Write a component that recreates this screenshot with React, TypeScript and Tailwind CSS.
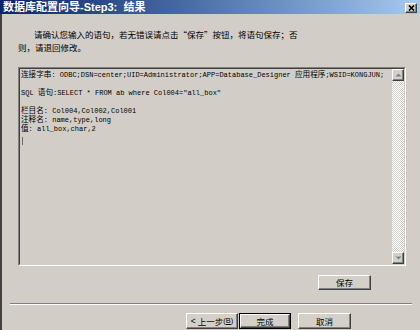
import React from "react";

const CJK = "font-['Noto_Sans_CJK_SC',sans-serif]";

/** Classic raised 3D button face. */
function Face({ className, children }: { className: string; children: React.ReactNode }) {
  return (
    <div
      className={[
        "flex items-center justify-center bg-[#d4d0c8] text-black",
        "border border-t-white border-l-white border-r-[#404040] border-b-[#404040]",
        "shadow-[inset_-1px_-1px_0_#808080]",
        className,
      ].join(" ")}
    >
      {children}
    </div>
  );
}

/** One row in the read-only text box. */
function Line({ children }: { children?: React.ReactNode }) {
  return <div className="h-[9px] leading-[9px] whitespace-nowrap">{children}</div>;
}

function Zh({ children }: { children: React.ReactNode }) {
  return <span className={`text-[7.6px] ${CJK}`}>{children}</span>;
}

function Arrow({ up }: { up?: boolean }) {
  return (
    <Face className="w-[12px] h-[12px] shrink-0">
      <svg width="7" height="4" viewBox="0 0 7 4">
        <path d={up ? "M0.5 3.5 L3.5 0.5 L6.5 3.5 Z" : "M0.5 0.5 L3.5 3.5 L6.5 0.5 Z"} fill="#808080" />
      </svg>
    </Face>
  );
}

export default function App() {
  return (
    <div className={`w-[420px] h-[330px] overflow-hidden bg-[#d2cec7] flex flex-col ${CJK}`}>
      {/* Title bar */}
      <div className="h-[14px] shrink-0 flex items-center justify-between pl-[3px] pr-[3px] bg-linear-to-r from-[#0a246a] to-[#a6caf0]">
        <span className="text-[11px] font-bold text-white leading-[14px] whitespace-pre font-['Liberation_Sans','Noto_Sans_CJK_SC',sans-serif]">
          数据库配置向导-Step3:  结果
        </span>
        <Face className="w-[12px] h-[10px] mt-[1px]">
          <svg width="7" height="6" viewBox="0 0 7 6">
            <path d="M1 0.5 L6 5.5 M6 0.5 L1 5.5" stroke="#000" strokeWidth="1.6" />
          </svg>
        </Face>
      </div>

      {/* Dialog body */}
      <div className="flex-1 flex flex-col border-l-2 border-l-[#424242]">
        <div className="pt-[14px] text-[8.5px] leading-[13px] text-black">
          <div className="pl-[32px]">请确认您输入的语句，若无错误请点击“保存”按钮，将语句保存；否</div>
          <div className="pl-[16px]">则，请退回修改。</div>
        </div>

        {/* Read-only text box */}
        <div className="mt-[13px] ml-[16px] w-[388px] h-[199px] shrink-0 border border-t-[#808080] border-l-[#808080] border-b-white border-r-white">
          <div className="h-full flex border border-t-[#404040] border-l-[#404040] border-b-[#d4d0c8] border-r-[#d4d0c8]">
            <div className="flex-1 overflow-hidden pl-[1px] text-[7px] text-black font-['Liberation_Mono','Noto_Sans_CJK_SC',monospace]">
              <Line>
                <Zh>连接字串</Zh>: ODBC;DSN=center;UID=Administrator;APP=Database_Designer <Zh>应用程序</Zh>;WSID=KONGJUN;
              </Line>
              <Line />
              <Line>
                SQL <Zh>语句</Zh>:SELECT * FROM ab where Col004="all_box"
              </Line>
              <Line />
              <Line>
                <Zh>栏目名</Zh>: Col004,Col002,Col001
              </Line>
              <Line>
                <Zh>注释名</Zh>: name,type,long
              </Line>
              <Line>
                <Zh>值</Zh>: all_box,char,2
              </Line>
              <div className="mt-[5px] ml-[0.5px] w-px h-[8px] bg-[#6a6a6a]" />
            </div>
            <div className="w-[12px] flex flex-col">
              <Arrow up />
              <div className="flex-1 bg-[repeating-conic-gradient(#d4d0c8_0_25%,#ffffff_0_50%)] bg-size-[2px_2px]" />
              <Arrow />
            </div>
          </div>
        </div>

        <Face className="mt-[9px] ml-[316px] w-[53px] h-[15px] text-[8.5px] leading-none">保存</Face>

        {/* Etched separator */}
        <div className="mt-[13px] ml-[8px] w-[402px] h-[2px] border-t border-t-[#808080] border-b border-b-white" />

        <div className="mt-[8px] ml-[184px] flex items-start">
          <Face className="w-[52px] h-[16px] text-[8.5px] leading-none">
            <span className="font-['Liberation_Sans',sans-serif] mr-[2px]">&lt;</span>
            上一步
            <span className="font-['Liberation_Sans',sans-serif] text-[7.5px]">
              (<span className="underline">B</span>)
            </span>
          </Face>
          <div className="ml-[1px] border border-black">
            <Face className="w-[50px] h-[14px] text-[8.5px] leading-none">完成</Face>
          </div>
          <Face className="ml-[7px] w-[53px] h-[16px] text-[8.5px] leading-none">取消</Face>
        </div>
      </div>
    </div>
  );
}
